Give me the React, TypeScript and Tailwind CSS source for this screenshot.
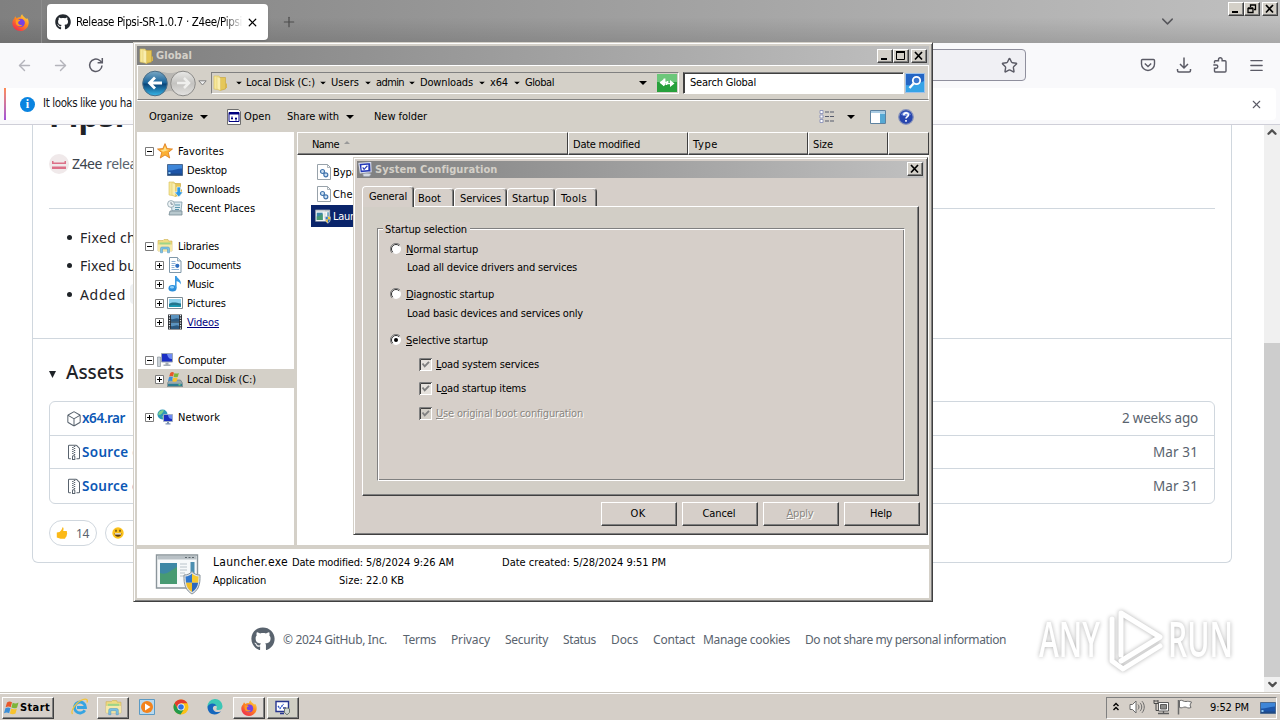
import { useLayoutEffect, useRef, useState } from 'react';
import type { ReactNode } from 'react';
import { GoPackage, GoFileZip } from 'react-icons/go';
import { FaGithub } from 'react-icons/fa';
import { ArrowLeft, ArrowRight, ChevronDown, Menu, Plus, Star, X } from 'lucide-react';

const UI = "font-['DejaVu_Sans_Condensed','DejaVu_Sans',sans-serif] [font-stretch:condensed]";
const RAISED =
  'border border-t-white border-l-white border-r-[#404040] border-b-[#404040] shadow-[inset_-1px_-1px_0_#808080]';

/** Label spread to a given advance width. */
function T({ w, children, className = '' }: { w: number; children: ReactNode; className?: string }) {
  const ref = useRef<HTMLSpanElement>(null);
  const [spacing, setSpacing] = useState(0);
  useLayoutEffect(() => {
    const el = ref.current;
    if (!el) return;
    const old = el.style.letterSpacing;
    el.style.letterSpacing = '0px';
    const natural = el.getBoundingClientRect().width;
    el.style.letterSpacing = old;
    setSpacing((w - natural) / (el.textContent || ' ').length);
  }, [w]);
  return (
    <span className={`inline-block shrink-0 whitespace-nowrap ${className}`} style={{ width: w }}>
      <span ref={ref} style={{ letterSpacing: spacing }}>{children}</span>
    </span>
  );
}

function Tri({ className = '' }: { className?: string }) {
  return (
    <svg viewBox="0 0 8 4" className={`h-1 w-2 shrink-0 ${className}`}>
      <path d="M0 0H8L4 4Z" fill="#000" />
    </svg>
  );
}

/* ---------- icons ---------- */

function Firefox({ className = 'size-4' }: { className?: string }) {
  return (
    <svg viewBox="0 0 16 16" className={`shrink-0 ${className}`}>
      <defs>
        <linearGradient id="ff" x1="0.9" y1="0" x2="0.2" y2="1">
          <stop offset="0" stopColor="#ffe14a" />
          <stop offset="0.45" stopColor="#ff8a1e" />
          <stop offset="1" stopColor="#f0264f" />
        </linearGradient>
      </defs>
      <path d="M2 4.500 3 2.200 4.400 4C5.500 3 7 3 8 3.200 8 1.800 8.800.8 9.600.2c.3 2 2.200 2.600 3.400 4 .8.3 1 .2 1.400-.3C16 6 16 9 15.200 11 14 14 11 16 8 16 4 16 .3 13 .3 8.500.3 6.800 1 5.500 2 4.500Z" fill="url(#ff)" />
      <circle cx="8.200" cy="8.300" r="3.900" fill="#7542e5" />
      <path d="M3.500 5.500c2-.8 3.500-.2 4.500.8-1.500.2-2.400 1-2.200 2.200.3 1.500 2 2.400 4 1.500C8.500 12.500 3.800 12 3.500 8Z" fill="#ff9a22" />
    </svg>
  );
}

function Folder({ className = 'size-4' }: { className?: string }) {
  return (
    <svg viewBox="0 0 16 16" className={`shrink-0 ${className}`}>
      <path d="M2 1h5l1 1.500V15L2 14Z" fill="#f6e79a" stroke="#d9bf55" strokeWidth=".6" />
      <path d="M8 2.500h5.500V14L8 15.500Z" fill="#e5c758" stroke="#c6a237" strokeWidth=".6" />
      <path d="M5 1.500 8.500 3v12.500L5 14Z" fill="#f9eeb0" stroke="#dcc467" strokeWidth=".5" />
      <path d="M13.500 8.500h1.500V13h-1.500z" fill="#d7b64c" />
    </svg>
  );
}

function Libraries({ className = 'size-4' }: { className?: string }) {
  return (
    <svg viewBox="0 0 16 16" className={`shrink-0 ${className}`}>
      <path d="M1 2.500h5l1-1h4l.5 1.500H15V13H1Z" fill="#f0dc81" stroke="#cfb052" strokeWidth=".6" />
      <path d="M2.500 4.500h11v3h-11z" fill="#9fd487" />
      <path d="M1 6.500h14V13H1Z" fill="#f6e9a8" />
      <path d="M3.500 14.800V10.500a1.500 1.500 0 0 1 1.500-1.500h6a1.500 1.500 0 0 1 1.500 1.500v4.300h-2V11H5.500v3.800Z" fill="#7cc2e6" stroke="#4a93bd" strokeWidth=".5" />
    </svg>
  );
}

function DesktopIcon({ className = 'size-4' }: { className?: string }) {
  return (
    <svg viewBox="0 0 16 16" className={`shrink-0 ${className}`}>
      <path d="M.5 2.500h15v11H.5z" fill="#1d55a8" stroke="#4c6a90" />
      <path d="M1 3h14v3.500C10 6.500 6 9 1 8.500Z" fill="#3f86d8" />
      <path d="M1 11.500h14V13H1z" fill="#1f4a86" />
      <path d="M1.500 10h2v2h-2z" fill="#8ec7ee" />
    </svg>
  );
}

function Downloads() {
  return (
    <span className="grid size-4 shrink-0">
      <Folder className="col-start-1 row-start-1 size-4" />
      <svg viewBox="0 0 16 16" className="col-start-1 row-start-1 size-4">
        <path d="M10 6h3.500v5H16l-4.200 5L7.500 11H10Z" fill="#2f9be6" stroke="#fff" strokeWidth=".6" />
      </svg>
    </span>
  );
}

function Recent() {
  return (
    <svg viewBox="0 0 16 16" className="size-4 shrink-0">
      <path d="M4 2h11l-1 9H5Z" fill="#dceaf0" stroke="#7c98a6" strokeWidth=".8" />
      <path d="M3 11h12v4H2Z" fill="#b8c8ce" stroke="#768b94" strokeWidth=".8" />
      <path d="M8 5h5M8 7.500h5M8 9.500h4" stroke="#5d97ae" />
      <circle cx="4" cy="4" r="3.400" fill="#eef4f6" stroke="#8ba0a8" strokeWidth=".8" />
      <path d="M4 2v2.200h2" fill="none" stroke="#567" strokeWidth=".7" />
    </svg>
  );
}

function StarGold() {
  return (
    <svg viewBox="0 0 16 16" className="size-4 shrink-0">
      <path d="m8 .6 2.100 5 5.400.4-4.200 3.500 1.400 5.500L8 12l-4.700 3 1.400-5.500L.5 6l5.400-.4Z" fill="#fbb034" stroke="#dd7a1c" strokeWidth=".8" />
      <path d="m8 3 1.300 3.500 3.200.3-6.500 2L3.500 7l3-.3Z" fill="#ffe08a" />
    </svg>
  );
}

function DocIcon() {
  return (
    <svg viewBox="0 0 16 16" className="size-4 shrink-0">
      <path d="M2.500.5h8l3.500 3.500v11.500H2.500Z" fill="#fff" stroke="#7f97a8" />
      <path d="M10.500.5V4H14" fill="#d6e6f2" stroke="#7f97a8" strokeWidth=".8" />
      <path d="M4.500 4.500h4M4.500 6.500h4M4.500 8.500h3M4.500 10.500h3M4.500 12.500h7.500" stroke="#8fb3d6" />
      <circle cx="10.300" cy="8.800" r="2.100" fill="#2f6fc0" />
    </svg>
  );
}

function MusicIcon() {
  return (
    <svg viewBox="0 0 16 16" className="size-4 shrink-0">
      <ellipse cx="5.500" cy="12.300" rx="4" ry="3.300" fill="#2a8fdc" />
      <ellipse cx="5" cy="11.300" rx="2" ry="1.200" fill="#8fd0fa" />
      <path d="M8 0h1.600c.6 2.800 5 3.500 4.200 8.500-.8-2.200-2.200-3-4.200-3.300V12H8Z" fill="#3a9be4" />
    </svg>
  );
}

function PicturesIcon() {
  return (
    <svg viewBox="0 0 16 16" className="size-4 shrink-0">
      <path d="M.5 2.500h15v11H.5z" fill="#fff" stroke="#7f8c94" />
      <path d="M2 4h12v8H2z" fill="#8fd2ee" />
      <path d="M2 9c4-2.500 7-1 12-.5V12H2Z" fill="#23748c" />
      <path d="M2 10.500c4-1 8-.5 12 0V12H2Z" fill="#1a9ab4" />
    </svg>
  );
}

function VideosIcon() {
  return (
    <svg viewBox="0 0 16 16" className="size-4 shrink-0">
      <path d="M1 .5h14v15H1z" fill="#2b2f35" />
      <path d="M4 1h8v6.500H4zM4 8.500h8V15H4z" fill="#5b93bf" />
      <path d="M4 5c3 1 5-2 8 0v2.500H4ZM4 12c3 1 5-2 8 0v3H4Z" fill="#2b587f" />
      <path d="M2.500 1v14M13.500 1v14" stroke="#e7ebee" strokeWidth="1.200" strokeDasharray="1.300 1.200" />
    </svg>
  );
}

function ComputerIcon() {
  return (
    <svg viewBox="0 0 16 16" className="size-4 shrink-0">
      <path d="M.5 5h3v9.500h-3z" fill="#c9d0d6" stroke="#808a92" strokeWidth=".6" />
      <path d="M4.500 1.500h11v8.500h-11z" fill="#1b2fc4" stroke="#9aa5b5" />
      <path d="M10 2h5v5c-2.500 0-4-1-5-5Z" fill="#6f8cf4" />
      <path d="M8.500 10.500h3v2h2v1.500H6.500v-1.500h2z" fill="#a4adb6" />
    </svg>
  );
}

function Flag({ className = 'size-4' }: { className?: string }) {
  return (
    <svg viewBox="0 0 16 16" className={`shrink-0 ${className}`}>
      <path d="M3 2.500C5 1 6.500 1.300 8 2.300L6.700 7.300C5.200 6.300 3.600 6.300 1.600 7.300Z" fill="#e8582a" />
      <path d="M8.700 2.700c2 1.100 3.600.9 5.800-.2L13.100 7.500c-2 1.200-3.800 1-5.700.1Z" fill="#7db53a" />
      <path d="M1.400 8.200C3.300 7.200 5 7.300 6.500 8.200L5.100 13.300C3.700 12.300 2 12.300 0 13.300Z" fill="#3c8fd8" />
      <path d="M7.200 8.600c1.900 1 3.700 1 5.700-.1L11.500 13.500c-2 1.100-3.700 1-5.600 0Z" fill="#f8c32c" />
    </svg>
  );
}

function DiskIcon() {
  return (
    <span className="grid size-4 shrink-0">
      <svg viewBox="0 0 16 16" className="col-start-1 row-start-1 size-4">
        <path d="M2.500 9h11l2.300 3.500v3H.2v-3Z" fill="#9ba9ad" stroke="#5c7478" strokeWidth=".6" />
        <path d="M1 12.800h14V15H1z" fill="#2c7d92" />
        <path d="M11.500 13.300h2v1h-2z" fill="#8dee6f" />
      </svg>
      <Flag className="col-start-1 row-start-1 ml-px size-3" />
    </span>
  );
}

function NetworkIcon() {
  return (
    <svg viewBox="0 0 16 16" className="size-4 shrink-0">
      <circle cx="5.500" cy="5.500" r="5" fill="#2f9ab8" />
      <path d="M2 3c2-2 4-2 5-1.500L5 4.500 3 6 1 5.500ZM5 7l3 1-2 2.300Z" fill="#7fd08a" />
      <path d="M6.500 5.500h9v7h-9z" fill="#1c2fc0" stroke="#a5b2c2" strokeWidth=".9" />
      <path d="M11 6h4v4c-2 0-3.500-1-4-4Z" fill="#6d8bf2" />
      <path d="M10 13h2v1.300h1.500v1.200h-5v-1.200H10z" fill="#7d93b4" />
    </svg>
  );
}

function GearFile() {
  return (
    <svg viewBox="0 0 16 16" className="size-4 shrink-0">
      <path d="M1.500.5h10l3 3v12h-13Z" fill="#fff" stroke="#98a2aa" />
      <path d="M11.500.5v3h3" fill="none" stroke="#98a2aa" strokeWidth=".8" />
      <circle cx="6.500" cy="7.500" r="2" fill="#cfe2f3" stroke="#4375ad" strokeWidth="1.200" />
      <circle cx="9.800" cy="10.800" r="2" fill="#cfe2f3" stroke="#4375ad" strokeWidth="1.200" />
    </svg>
  );
}

function Shield() {
  return (
    <>
      <path d="M29 22c4 0 6-1.500 8-3.500 2 2 4 3.500 8 3.500.5 10-2 15.500-8 19-6-3.500-8.500-9-8-19Z" fill="#dfe4e8" stroke="#8a949c" />
      <path d="M30.500 23.500c2.700-.2 4.800-1.300 6.500-3v9.200H31Z" fill="#2f77cd" />
      <path d="M37 20.500c1.700 1.700 3.800 2.800 6.500 3l-.4 6.200H37Z" fill="#f7c92e" />
      <path d="M31 29.700h6V39c-3.500-2-5.400-5-6-9.300Z" fill="#f0bd27" />
      <path d="M37 29.700h6.100c-.6 4.300-2.600 7.300-6.100 9.300Z" fill="#2a68bd" />
    </>
  );
}

function AppIcon({ className = '' }: { className?: string }) {
  return (
    <svg viewBox="0 0 46 42" className={`shrink-0 ${className}`}>
      <path d="M1.500 2h41v33h-41z" fill="#f7f9fa" stroke="#8b959b" strokeWidth="1.400" />
      <path d="M2.500 3h39v3.500h-39z" fill="#b9c1c6" />
      <path d="M30 4.500h10" stroke="#5e686e" strokeDasharray="2 1.500" />
      <path d="M5 10h17v21H5z" fill="#3d87a5" />
      <path d="M5 20c7 3 12-4 17-6v17H5Z" fill="#479a72" />
      <path d="M25 11h7M25 14h7M25 17h7M25 20h5M25 23h5" stroke="#b9c4ca" strokeWidth="1.200" />
      <path d="M35.500 9h4v14h-4z" fill="#4d8fb0" />
      <Shield />
    </svg>
  );
}

function ConfigIcon() {
  return (
    <svg viewBox="0 0 16 16" className="size-[15px] shrink-0">
      <path d="M1 1.500 13.500.5l.5 10-11.500 1Z" fill="#2338b8" stroke="#d7dcec" strokeWidth="1.200" />
      <path d="M3.500 3.500 11 3v5.500L4 9Z" fill="#fff" />
      <path d="m5 5.800 1.500 2L10 4" fill="none" stroke="#2338b8" strokeWidth="1.200" />
      <path d="M5 13c1-1.500 8-1.500 9 0l-2 2.500H6Z" fill="#d4d9e2" stroke="#8e95a4" strokeWidth=".6" />
    </svg>
  );
}

function ConfigTask() {
  return (
    <svg viewBox="0 0 18 16" className="h-4 w-[18px] shrink-0">
      <path d="M2 1.500h12.500v10H2z" fill="#fff" stroke="#26358f" strokeWidth="1.400" />
      <path d="m4 6 2 2.500L9.500 4" fill="none" stroke="#2c55c8" strokeWidth="1.300" strokeDasharray="2 .7" />
      <path d="M9 8h3M6 13.500h4" stroke="#26358f" strokeWidth="1.300" />
      <path d="M10.500 9 13 7.800 15.500 9v3.500L13 14.800l-2.500-2.300Z" fill="#cfd5d0" stroke="#6d7a70" />
    </svg>
  );
}

/* ---------- window controls ---------- */

type Glyph = 'min' | 'max' | 'restore' | 'close';

function Caption({ glyph, className = '' }: { glyph: Glyph; className?: string }) {
  return (
    <span className={`flex h-[14px] w-4 shrink-0 items-center justify-center bg-[#d4d0c8] ${RAISED} ${className}`}>
      <svg viewBox="0 0 12 10" className="h-[10px] w-3" fill="none" stroke="#000">
        {glyph === 'min' && <path d="M2 8h6" strokeWidth="2" />}
        {glyph === 'max' && (
          <>
            <path d="M1.500 1v7.500h8V1" />
            <path d="M1 1h9" strokeWidth="2" />
          </>
        )}
        {glyph === 'restore' && (
          <>
            <path d="M4.500 3V1h5v4.500H8M4 1h6" strokeWidth="1.300" />
            <path d="M2 4.500h5v4H2zM2 4h5" strokeWidth="1.300" />
          </>
        )}
        {glyph === 'close' && <path d="m2 1 7 7.500M9 1 2 8.500" strokeWidth="1.700" />}
      </svg>
    </span>
  );
}

/* ---------- browser ---------- */

function AssetRow({ icon, name, w, date, dw, h }: { icon: ReactNode; name: string; w: number; date: string; dw: number; h: string }) {
  return (
    <div className={`flex items-center border-t border-[#d0d7de] pr-4 pl-4 first:border-t-0 ${h}`}>
      {icon}
      <T w={w} className="text-[13.500px] font-semibold text-[#0b57b5]">{name}</T>
      <T w={dw} className="ml-auto text-[13.500px] text-[#59636e]">{date}</T>
    </div>
  );
}

function Browser() {
  return (
    <div className="flex h-[692px] w-[1280px] flex-col bg-white">
      <div className="flex h-11 shrink-0 items-start border-b border-[#77777a] bg-[linear-gradient(180deg,rgba(0,0,0,0)_40%,rgba(0,0,0,0.12)_100%),linear-gradient(90deg,#808080,#c0c0c0)]">
        <div className="flex h-11 w-[42px] items-center justify-center border-r border-[#8d8d8d]">
          <Firefox className="size-[17px]" />
        </div>
        <div className={`mt-1 ml-[5px] flex h-9 w-[221px] items-center rounded bg-white pl-2 shadow ${UI}`}>
          <FaGithub className="size-4 shrink-0 text-[#24292f]" />
          <span className="mt-0.5 ml-[5px] w-[167px] overflow-hidden text-[11.500px] text-black [mask-image:linear-gradient(90deg,#000_88%,transparent)]">
            <T w={166}>Release Pipsi-SR-1.0.7 · Z4ee/Pipsi</T>
          </span>
          <X className="ml-[3px] size-[13px] shrink-0 text-black" strokeWidth={2.200} />
        </div>
        <Plus className="mt-[14px] ml-[13px] size-4 text-[#4c4c4c]" strokeWidth={1.800} />
        <ChevronDown className="mt-3 ml-auto size-[19px] text-[#55555a]" strokeWidth={1.800} />
        <div className="mt-0.5 ml-[51px] flex pr-0.5">
          <Caption glyph="min" />
          <Caption glyph="restore" />
          <Caption glyph="close" className="ml-0.5" />
        </div>
      </div>
      <div className="-mt-px flex h-[45px] shrink-0 items-center bg-[#f9f9fb] pb-px pl-4 text-[#5b5b66]">
        <ArrowLeft className="size-[17px] text-[#b4b4bb]" strokeWidth={2} />
        <ArrowRight className="ml-[19px] size-[17px] text-[#b4b4bb]" strokeWidth={2} />
        <svg viewBox="0 0 16 16" className="ml-[19px] size-4" fill="none" stroke="currentColor" strokeWidth="1.500">
          <path d="M14 8.500A6.200 6.200 0 1 1 11.800 3.500L14 5.500" />
          <path d="M14.300 1v4.700H9.600" />
        </svg>
        <div className="ml-[80px] flex h-8 w-[842px] items-center justify-end rounded border border-[#8f8f9d] bg-[#f0f0f4] pr-[7px]">
          <Star className="size-[17px]" strokeWidth={2} />
        </div>
        <svg viewBox="0 0 16 16" className="ml-[114px] size-4" fill="none" stroke="currentColor" strokeWidth="1.400">
          <path d="M2.500 2.500h11a1 1 0 0 1 1 1V7a6.500 6.500 0 0 1-13 0V3.500a1 1 0 0 1 1-1Z" />
          <path d="M4.800 6.500 8 9.500l3.200-3" />
        </svg>
        <svg viewBox="0 0 16 16" className="ml-5 size-4" fill="none" stroke="currentColor" strokeWidth="1.500">
          <path d="M8 .5v10M4 7l4 4 4-4M1.500 12v1.500a1.500 1.500 0 0 0 1.500 1.500h10a1.500 1.500 0 0 0 1.500-1.500V12" />
        </svg>
        <svg viewBox="0 0 16 16" className="ml-5 size-4" fill="none" stroke="currentColor" strokeWidth="1.400">
          <path d="M2.500 6.200V4.500a.8.800 0 0 1 .8-.8h3.200V2.600a1.800 1.800 0 0 1 3.600 0v1.100H13a1 1 0 0 1 1 1V14a1 1 0 0 1-1 1H3.500a1 1 0 0 1-1-1v-2.800h1.700a1.600 1.600 0 0 0 0-3.200H1.300" />
        </svg>
        <Menu className="ml-5 size-[17px]" strokeWidth={1.800} />
      </div>
      <div className="flex h-[37px] shrink-0 items-start border-b border-[#cfcfd8] bg-[#f9f9fb] px-1">
        <div className={`flex h-8 w-full items-center rounded-r bg-white ${UI}`}>
          <span className="h-full w-0.5 bg-linear-to-b from-[#ff8a50] to-[#a34fd8]" />
          <span className="ml-[14px] flex size-[15px] items-center justify-center rounded-full bg-[#0a84e0] font-['Liberation_Serif'] text-[12px] leading-none font-bold text-white">i</span>
          <T w={89} className="ml-2 text-[11.500px] text-[#15141a]">It looks like you ha</T>
          <X className="mr-[13px] ml-auto size-[13px] text-[#5b5b66]" strokeWidth={2} />
        </div>
      </div>
      <div className="flex min-h-0 flex-1 font-['Noto_Sans',sans-serif] text-[#1f2328]">
        <div className="flex w-8 shrink-0" />
        <div className="flex w-[1200px] flex-col">
          <div className="flex h-[438px] shrink-0 flex-col overflow-hidden rounded-b-md border border-t-0 border-[#d0d7de]">
            <div className="h-[83px] shrink-0 px-4">
              <div className="h-6 overflow-hidden">
                <h1 className="-mt-[34px] text-[32px] leading-[48px] font-bold">Pipsi-SR</h1>
              </div>
              <div className="-mt-px flex h-8 items-center text-[14px] text-[#59636e]">
                <svg viewBox="0 0 20 20" className="size-5">
                  <circle cx="10" cy="10" r="10" fill="#f0e9ea" />
                  <path d="M3 7h1.500v1.500h11V7H17v3H3zM3 12.500h14V15H3z" fill="#dc7088" />
                </svg>
                <T w={30} className="-mt-0.5 ml-[3px] text-[#3c444d]">Z4ee</T>
                <T w={31} className="-mt-0.5 ml-1">relea</T>
              </div>
            </div>
            <div className="mx-4 h-[130px] shrink-0 border-t border-[#d0d7de] pt-[14px] text-[14px]">
              {[
                ['Fixed ch', 56],
                ['Fixed bu', 56],
                ['Added', 46],
              ].map(([s, w], i) => (
                <div key={i} className="flex h-[28.500px] items-center pl-[18px]">
                  <span className="mr-2 size-[5px] rounded-full bg-[#1f2328]" />
                  <T w={w as number}>{s}</T>
                  {i === 2 && <span className="ml-1 h-5 w-10 rounded bg-[#eff1f3]" />}
                </div>
              ))}
            </div>
            <div className="flex-1 border-t border-[#d0d7de] px-4">
              <div className="flex h-[62px] items-center pt-[5px]">
                <svg viewBox="0 0 8 8" className="mt-1 size-[7px]"><path d="M0 0h8L4 8Z" fill="#1f2328" /></svg>
                <T w={58} className="ml-[10px] text-[19px] font-medium">Assets</T>
              </div>
              <div className="rounded-md border border-[#d0d7de]">
                <AssetRow h="h-[33px]" icon={<GoPackage className="size-4 text-[#59636e]" />} name="x64.rar" w={43} date="2 weeks ago" dw={76} />
                <AssetRow h="h-[33px]" icon={<GoFileZip className="size-4 text-[#59636e]" />} name="Source code (zip)" w={116} date="Mar 31" dw={45} />
                <AssetRow h="h-[35px]" icon={<GoFileZip className="size-4 text-[#59636e]" />} name="Source code (tar.gz)" w={133} date="Mar 31" dw={45} />
              </div>
              <div className="mt-4 flex gap-2">
                <div className="flex h-[26px] w-12 items-center rounded-full border border-[#d0d7de] pl-1.5 text-[12px] text-[#59636e]">
                  <svg viewBox="0 0 12 12" className="size-3">
                    <path d="M6.500.3c1.200 0 1.300 1.700.7 3.700h3c1 0 1.200 1.200.6 1.600.6.400.5 1.300 0 1.600.4.500.2 1.300-.4 1.500.2.700-.1 1.300-.8 1.500.1.900-.5 1.500-1.300 1.500H4.500L.8 10.500V5.500L3.500 5C5 4 6 2.500 6.500.3Z" fill="#fbb917" />
                  </svg>
                  <T w={13} className="mt-0.5 ml-2">14</T>
                </div>
                <div className="flex h-[26px] w-12 items-center rounded-full border border-[#d0d7de] pl-1.5">
                  <svg viewBox="0 0 12 12" className="size-3">
                    <circle cx="6" cy="6" r="5.700" fill="#fcc21b" />
                    <path d="M2.500 6.200h7C9.300 11 2.700 11 2.500 6.200Z" fill="#5d3a12" />
                    <path d="M3 6.300h6v1.200H3z" fill="#fff" />
                    <path d="M4 2.800v2M8 2.800v2" stroke="#4a3110" strokeWidth="1.200" />
                  </svg>
                </div>
              </div>
            </div>
          </div>
          <div className="mt-[64px] ml-[219px] flex items-center text-[12px] text-[#59636e]">
            <FaGithub className="size-6" />
            <div className="flex pt-0.5">
              <T w={104} className="ml-2">© 2024 GitHub, Inc.</T>
              <T w={33} className="ml-4">Terms</T>
              <T w={39} className="ml-[15px]">Privacy</T>
              <T w={43} className="ml-[15px]">Security</T>
              <T w={33} className="ml-[15px]">Status</T>
              <T w={27} className="ml-[15px]">Docs</T>
              <T w={42} className="ml-[15px]">Contact</T>
              <T w={87} className="ml-2">Manage cookies</T>
              <T w={201} className="ml-[15px]">Do not share my personal information</T>
            </div>
          </div>
        </div>
        <div className="ml-8 flex w-4 flex-col items-center bg-[#f0f0f0] text-[#505050]">
          <ChevronDown className="size-[14px] rotate-180" strokeWidth={4} />
          <span className="mt-[204px] h-[334px] w-full bg-[#cdcdcd]" />
          <ChevronDown className="mt-px size-[13px]" strokeWidth={4} />
        </div>
      </div>
    </div>
  );
}

/* ---------- explorer ---------- */

interface Node {
  icon?: ReactNode;
  label?: string;
  w?: number;
  box?: '+' | '-';
  child?: boolean;
  on?: boolean;
  link?: boolean;
}

const tree: Node[] = [
  { icon: <StarGold />, label: 'Favorites', w: 46, box: '-' },
  { icon: <DesktopIcon />, label: 'Desktop', w: 40, child: true },
  { icon: <Downloads />, label: 'Downloads', w: 53, child: true },
  { icon: <Recent />, label: 'Recent Places', w: 68, child: true },
  {},
  { icon: <Libraries />, label: 'Libraries', w: 41, box: '-' },
  { icon: <DocIcon />, label: 'Documents', w: 54, box: '+', child: true },
  { icon: <MusicIcon />, label: 'Music', w: 27, box: '+', child: true },
  { icon: <PicturesIcon />, label: 'Pictures', w: 39, box: '+', child: true },
  { icon: <VideosIcon />, label: 'Videos', w: 32, box: '+', child: true, link: true },
  {},
  { icon: <ComputerIcon />, label: 'Computer', w: 48, box: '-' },
  { icon: <DiskIcon />, label: 'Local Disk (C:)', w: 69, box: '+', child: true, on: true },
  {},
  { icon: <NetworkIcon />, label: 'Network', w: 42, box: '+' },
];

function TreeRow({ n }: { n: Node }) {
  return (
    <div className={`ml-px flex h-[19px] items-center ${n.child ? 'pl-[17px]' : 'pl-[7px]'} ${n.on ? 'bg-[#d4d0c8]' : ''}`}>
      <span className="flex w-3 shrink-0 pt-0.5">
        {n.box && (
          <svg viewBox="0 0 9 9" className="size-[9px]">
            <path d="M.5.5h8v8h-8z" fill="#fff" stroke="#7b7b7b" />
            <path d={n.box === '+' ? 'M2 4.500h5M4.500 2v5' : 'M2 4.500h5'} stroke="#000" />
          </svg>
        )}
      </span>
      {n.icon}
      {n.label && (
        <T w={n.w ?? 40} className={`mt-0.5 ${n.child ? 'ml-1' : 'ml-[5px]'} ${n.link ? 'text-[#000080] underline' : ''}`}>{n.label}</T>
      )}
    </div>
  );
}

const crumbs: [string, number, string][] = [
  ['Local Disk (C:)', 69, 'w-[85px]'],
  ['Users', 28, 'w-[45px]'],
  ['admin', 28, 'w-11'],
  ['Downloads', 53, 'w-[70px]'],
  ['x64', 18, 'w-[35px]'],
  ['Global', 29, 'w-[29px]'],
];

function Explorer() {
  return (
    <div className={`absolute top-[42px] left-[133px] flex h-[560px] w-[800px] flex-col border border-t-[#d4d0c8] border-r-[#404040] border-b-[#404040] border-l-[#d4d0c8] bg-[#d4d0c8] p-[3px] text-[11px] leading-[14px] text-black shadow-[inset_1px_1px_0_#fff,inset_-1px_-1px_0_#808080] ${UI}`}>
      <div className="flex h-[19px] shrink-0 items-center bg-linear-to-r from-[#808080] to-[#c0c0c0] pr-0.5 pl-px">
        <Folder />
        <T w={36} className="ml-0.5 font-bold text-[#d4d0c8]">Global</T>
        <Caption glyph="min" className="ml-auto" />
        <Caption glyph="max" />
        <Caption glyph="close" className="ml-0.5" />
      </div>
      <div className="flex h-[35px] shrink-0 items-center border border-t-white border-r-white border-b-[#808080] border-l-white pl-1">
        <svg viewBox="0 0 56 28" className="h-7 w-14 shrink-0">
          <defs>
            <linearGradient id="bk" x2="0" y2="1">
              <stop offset="0" stopColor="#7ba8c4" />
              <stop offset=".48" stopColor="#17639b" />
              <stop offset=".52" stopColor="#0b4377" />
              <stop offset="1" stopColor="#36b8ea" />
            </linearGradient>
            <linearGradient id="fw" x2="0" y2="1">
              <stop offset="0" stopColor="#e9e9e7" />
              <stop offset=".5" stopColor="#c4c3c0" />
              <stop offset="1" stopColor="#e4e3e1" />
            </linearGradient>
          </defs>
          <path d="M13 2C20 2 22 4 28 4S36 2 42 2v24c-6 0-8-4-14-4s-8 4-15 4Z" fill="#b9b7b3" />
          <circle cx="13" cy="14.500" r="12.300" fill="url(#bk)" stroke="#4b6d86" />
          <path d="M20 14H8M13 8.500 7.500 14l5.500 5.500" fill="none" stroke="#fff" strokeWidth="2.800" />
          <circle cx="41" cy="14.500" r="12.300" fill="url(#fw)" stroke="#8c8b88" />
          <path d="M35 14h11M42 9l5 5-5 5" fill="none" stroke="#efefed" strokeWidth="2.500" />
        </svg>
        <svg viewBox="0 0 9 6" className="h-1.5 w-[9px] shrink-0"><path d="M.8.800h7.400L4.500 5Z" fill="#eee" stroke="#808080" /></svg>
        <div className="ml-1 flex h-[22px] w-[468px] shrink-0 items-center border border-t-[#808080] border-r-white border-b-white border-l-[#808080]">
          <Folder />
          <Tri className="mr-[3px] ml-[7px] scale-75" />
          {crumbs.map(([s, w, cell], i) => (
            <span key={s} className={`flex shrink-0 items-center justify-between ${cell}`}>
              <T w={w}>{s}</T>
              {i < 5 && <Tri className="mr-1 scale-75" />}
            </span>
          ))}
          <Tri className="ml-auto" />
          <svg viewBox="0 0 20 18" className="mr-px ml-[10px] h-[18px] w-5">
            <path d="M0 0h20v18H0z" fill="#28a03c" />
            <path d="M0 0h20v8H0z" fill="#6cc77a" />
            <path d="M7.500 4.500v6.500M3.500 8l4 3.500" fill="none" stroke="#fff" strokeWidth="1.800" />
            <path d="M2.500 8.500 7 5v7ZM17.500 9.500 13 6v7Z" fill="#fff" />
            <path d="M6 8.500h3.500V11M14 9.500h-3.500V7" fill="none" stroke="#fff" strokeWidth="1.600" />
          </svg>
        </div>
        <div className="ml-1 flex h-[22px] w-[221px] shrink-0 items-center border border-t-[#808080] border-r-white border-b-white border-l-[#404040] bg-white pt-px pl-1.5 shadow-[inset_1px_1px_0_#404040]">
          <T w={66}>Search Global</T>
        </div>
        <svg viewBox="0 0 20 20" className="ml-px size-5 shrink-0">
          <path d="M.5.5h19v19H.5z" fill="#2465c4" stroke="#9cc1ea" />
          <path d="M1 12c6 1 12-1 18-4v11H1Z" fill="#36a3e6" />
          <circle cx="11.500" cy="7.500" r="3.700" fill="#3b77cf" stroke="#fff" strokeWidth="1.800" />
          <path d="m8.500 10.500-4 4.500" stroke="#fff" strokeWidth="2.400" />
        </svg>
      </div>
      <div className="flex h-8 shrink-0 items-center border-t border-white pl-3">
        <T w={44}>Organize</T>
        <Tri className="ml-[7px]" />
        <svg viewBox="0 0 16 16" className="ml-[18px] size-4">
          <path d="M1.500.5h11l2 2v13h-13Z" fill="#fff" stroke="#6e6e6e" />
          <path d="M3 3.500h10v9H3z" fill="#fff" stroke="#000080" />
          <path d="M3 4.500h10" stroke="#000080" strokeWidth="2" />
          <path d="M5 9.500h2M9 9.500h2M6 7.500v3M10 8.500v3" stroke="#000080" strokeWidth="1.200" />
        </svg>
        <T w={27} className="ml-0.5">Open</T>
        <T w={52} className="ml-4">Share with</T>
        <Tri className="ml-[7px]" />
        <T w={53} className="ml-5">New folder</T>
        <svg viewBox="0 0 16 14" className="ml-auto h-[14px] w-4" fill="none">
          <path d="M1 .5h3v3H1zM1 5h3v3H1zM1 9.500h3v3H1z" fill="#fff" stroke="#8089b5" strokeWidth=".8" />
          <path d="M6 2h4M11 2h4M6 6.500h4M11 6.500h4M6 11h4M11 11h4" stroke="#555a6c" />
        </svg>
        <Tri className="ml-3" />
        <svg viewBox="0 0 16 14" className="ml-[15px] h-[14px] w-4">
          <path d="M.5.5h15v13H.5z" fill="#fff" stroke="#5d82a0" />
          <path d="M1 1h14v2H1z" fill="#a9cbe2" />
          <path d="M10 3.500h5V13h-5z" fill="#56a9d4" />
        </svg>
        <svg viewBox="0 0 16 16" className="mr-[15px] ml-3 size-4">
          <circle cx="8" cy="8" r="7.300" fill="#2846ae" stroke="#8793bb" strokeWidth="1.200" />
          <path d="M3 5.500C5 1.500 11 1.500 13 5.500 10 7.500 6 7.500 3 5.500Z" fill="#6f8bdc" />
          <path d="M5.800 6.200c0-3 4.600-3 4.600-.3C10.400 7.500 8 7.600 8 9.600M8 11v1.700" fill="none" stroke="#fff" strokeWidth="1.600" />
        </svg>
      </div>
      <div className="flex h-[413px] shrink-0">
        <div className="w-[157px] bg-white pt-[9px]">
          {tree.map((n, i) => <TreeRow key={i} n={n} />)}
        </div>
        <div className="w-[3px] bg-[#d4d0c8]" />
        <div className="flex flex-1 flex-col bg-white">
          <div className="flex h-[23px] shrink-0 bg-[#d4d0c8]">
            {([['Name', 27, 'w-[271px] pl-[14px]'], ['Date modified', 67, 'w-[120px] pl-1'], ['Type', 25, 'w-[120px] pl-1'], ['Size', 20, 'w-20 pl-1'], ['', 1, 'w-[41px]']] as [string, number, string][]).map(([s, w, c], i) => (
              <div key={i} className={`flex shrink-0 items-center border border-t-white border-r-[#404040] border-b-[#404040] border-l-white pt-0.5 shadow-[inset_0_-1px_0_#808080] ${c}`}>
                {s && <T w={w}>{s}</T>}
                {i === 0 && <svg viewBox="0 0 6 3" className="mb-1 ml-[5px] h-[3px] w-1.5"><path d="M0 3h6L3 0Z" fill="#999" /></svg>}
              </div>
            ))}
          </div>
          <div className="flex flex-col pt-[6px] pl-[14px]">
            {([['Bypass.dll', 50, false], ['Cheat.dll', 46, false], ['Launcher.exe', 62, true]] as [string, number, boolean][]).map(([s, w, on]) => (
              <div key={s} className={`flex h-[22px] w-[254px] items-center ${on ? 'bg-[#0a246a] pl-1 text-white' : 'pl-[5px]'}`}>
                {on ? <AppIcon className="h-[15px] w-4" /> : <GearFile />}
                <T w={w} className={`mt-px ${on ? 'ml-0.5' : 'ml-px'}`}>{s}</T>
              </div>
            ))}
          </div>
        </div>
      </div>
      <div className="mt-1 flex flex-1 items-start bg-white pt-1 pl-[18px]">
        <AppIcon className="h-[42px] w-[46px]" />
        <div className="mt-[3px] ml-3 flex flex-col gap-1">
          <T w={75} className="-mt-px mb-px text-[12px]">Launcher.exe</T>
          <T w={53}>Application</T>
        </div>
        <div className="mt-[3px] ml-1 flex flex-col items-end gap-1">
          <T w={71}>Date modified:</T>
          <T w={24}>Size:</T>
        </div>
        <div className="mt-[3px] ml-[3px] flex flex-col gap-1">
          <T w={88}>5/8/2024 9:26 AM</T>
          <T w={38}>22.0 KB</T>
        </div>
        <div className="mt-[3px] ml-12 flex gap-[3px]">
          <T w={68}>Date created:</T>
          <T w={93}>5/28/2024 9:51 PM</T>
        </div>
      </div>
    </div>
  );
}

/* ---------- system configuration ---------- */

function Radio({ on, label, w, className = '' }: { on?: boolean; label: string; w: number; className?: string }) {
  return (
    <div className={`flex h-[14px] items-center ${className}`}>
      <svg viewBox="0 0 12 12" className="mb-0.5 size-3">
        <circle cx="6" cy="6" r="5" fill="#fff" />
        <path d="M2 10A5.500 5.500 0 0 1 10 2" fill="none" stroke="#808080" />
        <path d="M2.800 9.200A4.500 4.500 0 0 1 9.200 2.800" fill="none" stroke="#303030" />
        {on && <circle cx="6" cy="6" r="2" />}
      </svg>
      <T w={w} className="ml-1"><u>{label[0]}</u>{label.slice(1)}</T>
    </div>
  );
}

function Check({ pre = '', hot, rest, w, off, className = '' }: { pre?: string; hot: string; rest: string; w: number; off?: boolean; className?: string }) {
  return (
    <div className={`ml-[29px] flex h-[14px] items-center ${className}`}>
      <svg viewBox="0 0 13 13" className="mb-0.5 size-[13px]">
        <path d="M0 0h13v13H0z" fill="#fff" />
        <path d="M2 2h10v10H2z" fill={off ? '#d4d0c8' : '#e6e2dd'} />
        <path d="M.5 13V.5H13" fill="none" stroke="#808080" />
        <path d="M1.500 12V1.500H12" fill="none" stroke="#404040" />
        <path d="m3.500 5.500 2.200 2.800L10 3.800" fill="none" stroke="#808080" strokeWidth="1.900" />
      </svg>
      <T w={w} className={`ml-1 ${off ? 'text-[#8a8782] [text-shadow:1px_1px_0_#fff]' : ''}`}>{pre}<u>{hot}</u>{rest}</T>
    </div>
  );
}

function Dialog() {
  return (
    <div className={`absolute top-[157px] left-[353px] flex h-[378px] w-[575px] flex-col border border-t-[#d4d0c8] border-r-[#404040] border-b-[#404040] border-l-[#d4d0c8] bg-[#d6cfc9] p-[3px] text-[11px] leading-[14px] text-black shadow-[inset_1px_1px_0_#fff,inset_-1px_-1px_0_#808080] ${UI}`}>
      <div className="flex h-[17px] shrink-0 items-center bg-linear-to-r from-[#808080] to-[#c0c0c0] pr-px pl-px">
        <ConfigIcon />
        <T w={122} className="ml-0.5 font-bold text-[#d4d0c8]">System Configuration</T>
        <Caption glyph="close" className="-mt-px ml-auto" />
      </div>
      <div className="mt-2 flex h-5 shrink-0 items-end pl-[5px]">
        <div className="z-10 -mb-px flex h-[21px] w-[52px] rounded-t-sm border border-b-0 border-t-white border-r-[#404040] border-l-white bg-[#d6cfc9] pt-[3px] pl-1.5 shadow-[inset_-1px_0_0_#808080]">
          <T w={38}>General</T>
        </div>
        {([['Boot', 23, 'w-10 pl-[3px]'], ['Services', 41, 'w-[53px] pl-[5px]'], ['Startup', 37, 'w-12 pl-1'], ['Tools', 26, 'w-[42px] pl-[5px]']] as [string, number, string][]).map(([s, w, c]) => (
          <div key={s} className={`flex h-[18px] rounded-t-sm border border-b-0 border-t-white border-r-[#404040] border-l-white pt-[3px] shadow-[inset_-1px_0_0_#808080] ${c}`}>
            <T w={w}>{s}</T>
          </div>
        ))}
      </div>
      <div className={`mx-[5px] h-[290px] shrink-0 bg-[#d2cec6] pt-[21px] pl-[14px] ${RAISED}`}>
        <div className="h-[253px] w-[528px] border border-t-[#808080] border-r-white border-b-white border-l-[#808080] bg-[#d6cfc9] shadow-[inset_1px_1px_0_#fff,inset_-1px_-1px_0_#808080]">
          <div className="-mt-[7px] ml-[5px] flex h-[14px] w-[87px] bg-[#d6cfc9] pt-px pl-[2px]">
            <T w={82}>Startup selection</T>
          </div>
          <div className="flex flex-col pl-3">
            <Radio label="Normal startup" w={72} className="mt-[7px]" />
            <T w={170} className="mt-1 ml-[17px]">Load all device drivers and services</T>
            <Radio label="Diagnostic startup" w={88} className="mt-[13px]" />
            <T w={176} className="mt-[5px] ml-[17px]">Load basic devices and services only</T>
            <Radio on label="Selective startup" w={82} className="mt-[13px]" />
            <Check hot="L" rest="oad system services" w={103} className="mt-[10px]" />
            <Check pre="L" hot="o" rest="ad startup items" w={90} className="mt-[10px]" />
            <Check off hot="U" rest="se original boot configuration" w={147} className="mt-[11px]" />
          </div>
        </div>
      </div>
      <div className="mt-1.5 mr-1 flex justify-end gap-[5px]">
        {([['OK', 15], ['Cancel', 33], ['Apply', 27], ['Help', 22]] as [string, number][]).map(([s, w]) => (
          <div key={s} className={`flex h-6 w-[76px] items-center justify-center pr-0.5 ${RAISED} ${s === 'Apply' ? 'text-[#8a8782] [text-shadow:1px_1px_0_#fff]' : ''}`}>
            <T w={w}>{s === 'Apply' ? <><u>A</u>pply</> : s}</T>
          </div>
        ))}
      </div>
    </div>
  );
}

/* ---------- taskbar ---------- */

function Taskbar() {
  const running = `flex h-[22px] w-8 items-center justify-center ${RAISED}`;
  return (
    <div className={`flex h-7 w-[1280px] items-center border-t border-[#c9c5bd] bg-[#d5cfc8] pl-0.5 text-[11px] leading-[14px] text-black shadow-[inset_0_1px_0_#fff] ${UI}`}>
      <div className={`mt-0.5 flex h-[22px] w-[52px] items-center pl-px ${RAISED}`}>
        <Flag />
        <T w={30} className="font-bold">Start</T>
      </div>
      <svg viewBox="0 0 18 18" className="ml-[17px] size-[18px] shrink-0">
        <path d="M13.800 12.200A5.500 5.500 0 1 1 14.500 9.500H6" fill="none" stroke="#35a4e2" strokeWidth="2.800" />
        <path d="M1.500 16C-1 12.500 6 3.500 12 1.500c3.500-1.200 5 .3 4 3" fill="none" stroke="#f3c439" strokeWidth="1.300" />
      </svg>
      <div className={`mt-0.5 ml-2 ${running}`}><Libraries className="size-[17px]" /></div>
      <svg viewBox="0 0 16 16" className="ml-2.5 size-4 shrink-0">
        <path d="M.5.500h15v15H.5z" fill="#b9d9ee" stroke="#5b9ac4" />
        <circle cx="8" cy="8" r="6" fill="#f3831c" />
        <path d="M6 4.500v7L11.500 8Z" fill="#fff" />
      </svg>
      <svg viewBox="0 0 16 16" className="ml-[18px] size-4 shrink-0">
        <circle cx="8" cy="8" r="7.500" fill="#fbc116" />
        <path d="M1.500 4.200A7.500 7.500 0 0 1 14.500 4.300H8L4.700 9.800Z" fill="#e33b2e" />
        <path d="M1.500 4.200A7.500 7.500 0 0 0 7.500 15.500L11.300 9.800 4.700 9.800Z" fill="#229a4c" />
        <circle cx="8" cy="8" r="3.600" fill="#fff" />
        <circle cx="8" cy="8" r="2.800" fill="#2f72e2" />
      </svg>
      <svg viewBox="0 0 16 16" className="ml-[18px] size-4 shrink-0">
        <path d="M.5 8A7.500 7.500 0 0 1 15.500 7c.2 2.500-1.500 4-4 4-1.500 0-2.500-.6-2-1.500C10.500 7.500 9 6 7 6 3 6 1 9 .5 8Z" fill="#3cc6b6" />
        <path d="M.5 8C1.500 4 8 3 9.500 7 7 6 5.500 8 6 10c.8 3 4.500 4 8 2.200C11 17 .5 17 .5 8Z" fill="#1667bd" />
      </svg>
      <div className={`mt-0.5 ml-[10px] ${running} bg-[#ded9d4]`}><Firefox /></div>
      <div className={`mt-0.5 ml-0.5 ${running} bg-[#d0cfc4]`}><ConfigTask /></div>
      <div className="mt-0.5 mr-[3px] ml-auto flex h-[22px] w-[171px] items-center border border-t-[#808080] border-r-white border-b-white border-l-[#808080] pl-1.5">
        <svg viewBox="0 0 6 9" className="mb-0.5 h-[9px] w-1.5" fill="none" stroke="#000" strokeWidth="1.400"><path d="m.5 4 2.500-2.500L5.500 4M.5 8 3 5.500 5.500 8" /></svg>
        <svg viewBox="0 0 16 14" className="mb-0.5 ml-[10px] h-[14px] w-4" fill="none" stroke="#6b6b6b">
          <path d="M1 4.500h2.500L7 1v12L3.500 9.500H1Z" fill="#fff" />
          <path d="M9 4.500c1.300 1.500 1.300 3.500 0 5M11 2.800c2.300 2.400 2.300 6 0 8.400M13 1.200c3 3.400 3 8.200 0 11.600" />
        </svg>
        <svg viewBox="0 0 16 16" className="mb-0.5 ml-2 size-4" fill="none" stroke="#5b5b5b">
          <path d="M5.500 3.500h10v8.500h-10z" fill="#fff" />
          <path d="M7.500 5.500h6v4.500h-6z" fill="#8c8c8a" />
          <path d="M5 14.500h11M10.500 12v2" strokeWidth="1.300" />
          <path d="M1 1v3.500h4V1M3 4.500V11.500h3M2 1v2M4 1v2" stroke="#4a4a4a" />
        </svg>
        <svg viewBox="0 0 16 16" className="mb-0.5 ml-2 size-4" fill="none" stroke="#6b6b6b">
          <path d="M2.500 1.500c3-1 4 1.500 6.500 1 2-.4 3 0 5.500.5L13 6l1 2.500c-3 1.500-4-.5-6-.5s-3 1.500-5.500.5Z" fill="#fff" />
          <path d="M1.500 1v14.500" strokeWidth="1.500" />
        </svg>
        <T w={39} className="ml-[17px]">9:52 PM</T>
        <DesktopIcon className="ml-[11px] size-4" />
      </div>
    </div>
  );
}

function Watermark() {
  return (
    <svg viewBox="0 0 200 70" className="absolute top-[606px] left-[1036px] h-[70px] w-[200px] [filter:drop-shadow(0_0_2px_#b0b0b0)]">
      <g className="font-['Open_Sans',sans-serif] font-semibold" fill="#fff" fontSize="48">
        <text x="3" y="51" textLength="61" lengthAdjust="spacingAndGlyphs">ANY</text>
        <text x="132" y="51" textLength="65" lengthAdjust="spacingAndGlyphs">RUN</text>
      </g>
      <g fill="none" stroke="#fff" strokeWidth="5" strokeLinejoin="round" strokeLinecap="round">
        <path d="M85 49V7l39 24-39 24" />
        <path d="M76 13v42l11 8 37-23" />
      </g>
    </svg>
  );
}

export default function App() {
  return (
    <div className="relative h-[720px] w-[1280px] overflow-hidden bg-white">
      <Browser />
      <Taskbar />
      <Explorer />
      <Dialog />
      <Watermark />
    </div>
  );
}
